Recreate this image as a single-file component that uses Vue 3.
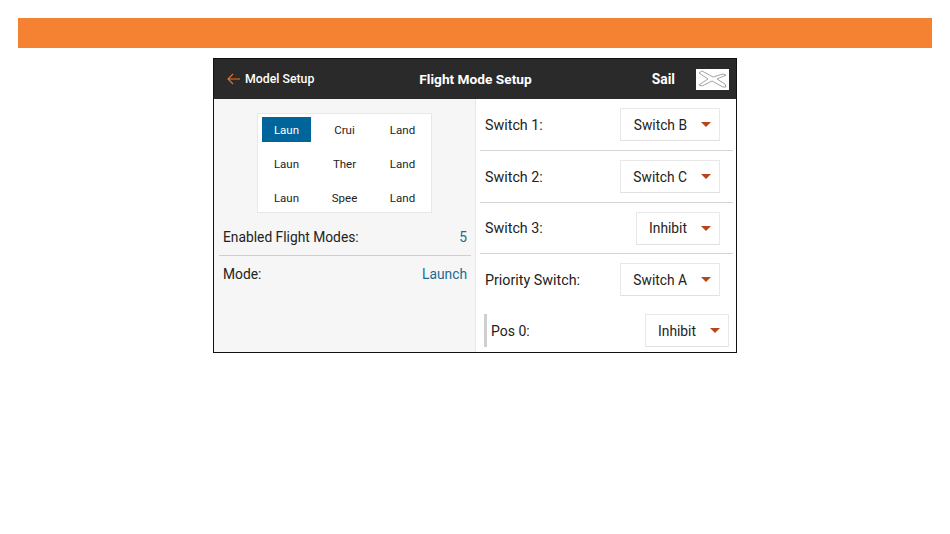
<script setup>
const modes = ['Laun', 'Crui', 'Land', 'Laun', 'Ther', 'Land', 'Laun', 'Spee', 'Land']
const rows = [
  { label: 'Switch 1:', value: 'Switch B', cls: 'r1', wide: true, sep: true },
  { label: 'Switch 2:', value: 'Switch C', cls: 'r2', wide: true, sep: true },
  { label: 'Switch 3:', value: 'Inhibit', cls: 'r3', wide: false, sep: true },
  { label: 'Priority Switch:', value: 'Switch A', cls: 'r4', wide: true, sep: false }
]
</script>

<template>
  <div class="page">
    <div class="banner"></div>
    <div class="frame">
      <header class="head">
        <div class="back">
          <svg class="arrow" width="13" height="12" viewBox="0 0 13 12">
            <path d="M6 1 1 6l5 5M1 6h12" fill="none" stroke="#e8742c" stroke-width="1.1" />
          </svg>
          <span>Model Setup</span>
        </div>
        <div class="title">Flight Mode Setup</div>
        <div class="model">Sail</div>
        <div class="plane">
          <svg width="33" height="21" viewBox="0 0 33 21">
            <path d="M3 4 6 2 17 8 27 5 30 6 21 10 29 15 30 18 27 18 16 12 6 17 3 16 12 10Z" fill="#fff" stroke="#999" stroke-width="0.9" />
          </svg>
        </div>
      </header>
      <div class="body">
        <section class="left">
          <div class="grid">
            <div v-for="(m, i) in modes" :key="i" class="cell" :class="{ active: i === 0 }">{{ m }}</div>
          </div>
          <div class="info first">
            <span>Enabled Flight Modes:</span>
            <span class="val">5</span>
          </div>
          <div class="info">
            <span>Mode:</span>
            <span class="val">Launch</span>
          </div>
        </section>
        <section class="right">
          <div v-for="r in rows" :key="r.label" class="row" :class="[r.cls, { sep: r.sep }]">
            <span class="label">{{ r.label }}</span>
            <div class="select" :class="{ wide: r.wide }">
              <span>{{ r.value }}</span><i class="caret"></i>
            </div>
          </div>
          <div class="pos">
            <span class="pos-label">Pos 0:</span>
            <div class="select">
              <span>Inhibit</span><i class="caret"></i>
            </div>
          </div>
        </section>
      </div>
    </div>
  </div>
</template>

<style scoped>
.page {
  padding: 18px;
  font-family: Roboto, "Liberation Sans", sans-serif;
  font-size: 13.8px;
  color: #222;
}
.banner {
  height: 30px;
  background: #f58233;
}
.frame {
  width: 524px;
  height: 295px;
  box-sizing: border-box;
  margin: 10px auto 0;
  border: 1px solid #111;
  display: flex;
  flex-direction: column;
}
.head {
  height: 40px;
  flex: none;
  background: #2a2a2a;
  color: #fff;
  display: flex;
  align-items: center;
  font-weight: 500;
  padding-left: 13px;
  position: relative;
}
.back {
  display: flex;
  align-items: center;
  gap: 5px;
  font-size: 12.3px;
}
.title {
  position: absolute;
  left: 0;
  width: 523px;
  text-align: center;
  font-size: 13.7px;
  font-weight: 700;
  pointer-events: none;
}
.model {
  margin-left: auto;
  font-weight: 700;
  margin-right: 21px;
}
.plane {
  width: 33px;
  height: 21px;
  background: #fff;
  margin-right: 7px;
}
.plane svg {
  display: block;
}
.body {
  flex: 1;
  display: flex;
  min-height: 0;
}
.left {
  width: 262px;
  flex: none;
  background: #f6f6f6;
  border-right: 1px solid #e6e6e6;
  padding: 14px 4px 0 5px;
  box-sizing: border-box;
}
.grid {
  width: 175px;
  height: 100px;
  box-sizing: border-box;
  margin-left: 38px;
  background: #fff;
  border: 1px solid #e8e8e8;
  padding: 3px 4px;
  display: grid;
  grid-template-columns: 49px 67px 49px;
  grid-auto-rows: 25px;
  row-gap: 9px;
}
.cell {
  display: flex;
  align-items: center;
  justify-content: center;
  font-size: 11.5px;
}
.cell.active {
  background: #00659a;
  color: #fff;
}
.info {
  display: flex;
  justify-content: space-between;
  align-items: center;
  height: 36px;
  padding: 0 4px;
}
.info.first {
  height: 43px;
  padding-top: 5px;
  border-bottom: 1px solid #cfcfcf;
  box-sizing: border-box;
}
.val {
  color: #1a6a94;
}
.right {
  flex: 1;
  padding: 0 3px 0 4px;
  min-width: 0;
  background: #fff;
}
.row {
  display: flex;
  align-items: center;
  justify-content: space-between;
  padding: 0 13px 0 5px;
  box-sizing: border-box;
  height: 52px;
}
.label {
  font-size: 14.3px;
}
.row.sep {
  border-bottom: 1px solid #d4d4d4;
}
.r3 {
  height: 51px;
}
.r4 {
  height: 51px;
}
.select {
  width: 84px;
  height: 33px;
  box-sizing: border-box;
  border: 1px solid #e8e8e8;
  border-bottom-color: #e0e0e0;
  display: flex;
  align-items: center;
  justify-content: flex-end;
  padding-right: 8px;
  background: #fff;
}
.select.wide {
  width: 100px;
}
.caret {
  width: 0;
  height: 0;
  margin-left: 14px;
  border-left: 5.5px solid transparent;
  border-right: 5.5px solid transparent;
  border-top: 5px solid #b8451a;
}
.pos {
  display: flex;
  align-items: center;
  justify-content: space-between;
  height: 33px;
  margin: 9px 4px 0 4px;
  border-left: 3px solid #cfcfcf;
}
.pos-label {
  padding-left: 4px;
  font-size: 14px;
}
</style>
